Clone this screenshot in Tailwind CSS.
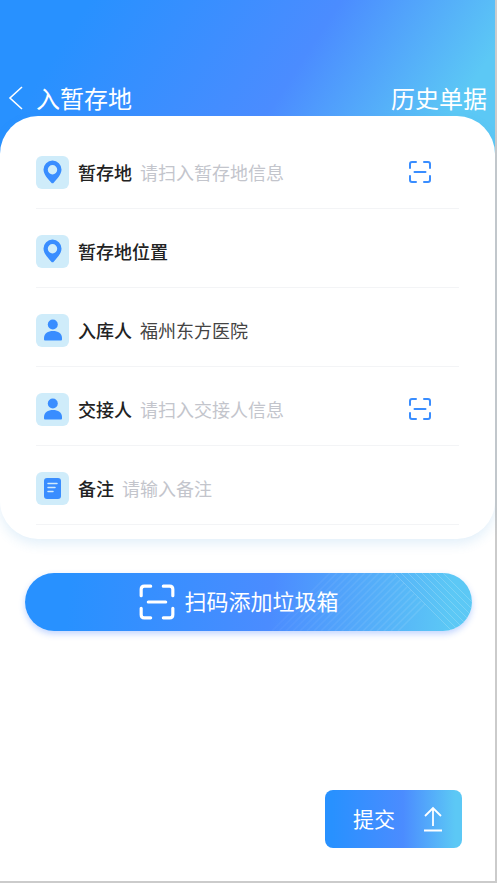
<!DOCTYPE html>
<html lang="zh-CN">
<head>
<meta charset="utf-8">
<meta name="viewport" content="width=device-width, initial-scale=1">
<title>入暂存地</title>
<script src="https://cdn.jsdelivr.net/npm/@tailwindcss/browser@4"></script>
</head>
<body class="font-['Noto_Sans_CJK_SC',sans-serif] bg-white">
<svg class="hidden" aria-hidden="true">
  <symbol id="pin" viewBox="0 0 33 33"><path fill="#398dff" fill-rule="evenodd" d="M16.500 4.500a9 9 0 0 0-9 9c0 5 4.300 9 7.600 13a1.800 1.800 0 0 0 2.800 0c3.300-4 7.600-8 7.600-13a9 9 0 0 0-9-9zm0 4.500a4.700 4.700 0 1 1 0 9.400a4.700 4.700 0 0 1 0-9.400z"/></symbol>
  <symbol id="person" viewBox="0 0 33 33"><g fill="#398dff"><circle cx="16.800" cy="10.500" r="5"/><path d="M8 25.500v-1.500c0-4.500 4-7 9-7s9 2.500 9 7v1.500q0 1-1 1h-16q-1 0-1-1z"/></g></symbol>
  <symbol id="note" viewBox="0 0 33 33"><rect x="8" y="6" width="17" height="21" rx="3" fill="#398dff"/><path d="M12 11.500h9M12 15.500h7M12 19.500h5" stroke="#d3ecfb" stroke-width="1.500" stroke-linecap="round"/></symbol>
  <symbol id="scan" viewBox="0 0 24 24"><path fill="none" stroke="currentColor" stroke-width="2" stroke-linecap="round" d="M2 8V4q0-2 2-2h4M16 2H20q2 0 2 2v4M22 16V20q0 2-2 2h-4M8 22H4q-2 0-2-2v-4M6.500 12h11"/></symbol>
</svg>
<div class="min-h-screen flex flex-col border-r-2 border-b-2 border-[#cbcbcb]">
  <header class="h-40 -mb-11 pt-20 bg-[linear-gradient(123deg,#2891ff_15%,#4b8cff_57%,#5cc8f5_88%)] text-white">
    <div class="h-9 px-2 flex items-center justify-between text-2xl">
      <div class="flex items-center gap-3">
        <button type="button" aria-label="返回"><svg class="block w-4 h-6" viewBox="0 0 16 24" fill="none" stroke="currentColor" stroke-width="1.600"><path d="M14 1L2 12l12 11"/></svg></button>
        <h1>入暂存地</h1>
      </div>
      <a href="#">历史单据</a>
    </div>
  </header>
  <main class="grow flex flex-col">
    <form class="grow flex flex-col">
      <div class="relative bg-white rounded-[38px] px-9 py-[14px] shadow-[0_5px_12px_rgba(60,150,220,0.14)] text-lg">
        <div class="h-[79px] pt-[6px] border-b border-[#f3f4f6] flex items-center">
          <svg class="w-[33px] h-[33px] rounded-md bg-[#cfecfa] shrink-0"><use href="#pin"/></svg>
          <label for="site" class="ml-[9px] font-medium text-[#222] shrink-0">暂存地</label>
          <input id="site" class="ml-2 min-w-0 grow outline-none text-[#444] placeholder:text-[#c3c5cc]" placeholder="请扫入暂存地信息">
          <button type="button" aria-label="扫描暂存地" class="mr-[27px] text-[#398dff]"><svg class="block w-6 h-6"><use href="#scan"/></svg></button>
        </div>
        <div class="h-[79px] pt-[6px] border-b border-[#f3f4f6] flex items-center">
          <svg class="w-[33px] h-[33px] rounded-md bg-[#cfecfa] shrink-0"><use href="#pin"/></svg>
          <label for="place" class="ml-[9px] font-medium text-[#222] shrink-0">暂存地位置</label>
          <input id="place" class="ml-2 min-w-0 grow outline-none text-[#444]">
        </div>
        <div class="h-[79px] pt-[6px] border-b border-[#f3f4f6] flex items-center">
          <svg class="w-[33px] h-[33px] rounded-md bg-[#cfecfa] shrink-0"><use href="#person"/></svg>
          <label for="keeper" class="ml-[9px] font-medium text-[#222] shrink-0">入库人</label>
          <input id="keeper" class="ml-2 min-w-0 grow outline-none text-[#444]" value="福州东方医院">
        </div>
        <div class="h-[79px] pt-[6px] border-b border-[#f3f4f6] flex items-center">
          <svg class="w-[33px] h-[33px] rounded-md bg-[#cfecfa] shrink-0"><use href="#person"/></svg>
          <label for="handover" class="ml-[9px] font-medium text-[#222] shrink-0">交接人</label>
          <input id="handover" class="ml-2 min-w-0 grow outline-none text-[#444] placeholder:text-[#c3c5cc]" placeholder="请扫入交接人信息">
          <button type="button" aria-label="扫描交接人" class="mr-[27px] text-[#398dff]"><svg class="block w-6 h-6"><use href="#scan"/></svg></button>
        </div>
        <div class="h-[79px] pt-[6px] border-b border-[#f3f4f6] flex items-center">
          <svg class="w-[33px] h-[33px] rounded-md bg-[#cfecfa] shrink-0"><use href="#note"/></svg>
          <label for="remark" class="ml-[9px] font-medium text-[#222] shrink-0">备注</label>
          <input id="remark" class="ml-2 min-w-0 grow outline-none text-[#444] placeholder:text-[#c3c5cc]" placeholder="请输入备注">
        </div>
      </div>
      <button type="button" class="relative overflow-hidden mt-[34px] ml-[25px] mr-[23px] h-[58px] pr-5 rounded-full bg-[linear-gradient(95deg,#2891ff_10%,#4b8cff_55%,#5cc8f5_95%)] shadow-[0_3px_6px_rgba(57,120,255,0.3)] text-white text-[22px] flex items-center justify-center gap-2">
        <svg class="absolute right-0 top-0 w-[200px] h-[58px]" viewBox="0 0 200 58" aria-hidden="true">
          <defs>
            <linearGradient id="fade" gradientUnits="userSpaceOnUse" x1="0" y1="0" x2="150" y2="0"><stop offset="0" stop-color="#fff" stop-opacity=".03"/><stop offset="1" stop-color="#fff" stop-opacity=".1"/></linearGradient>
          </defs>
          <path stroke="url(#fade)" stroke-width="1.500" d="M0 58L58 0M7 58L65 0M14 58L72 0M21 58L79 0M28 58L86 0M35 58L93 0M42 58L100 0M49 58L107 0M56 58L114 0M63 58L121 0M70 58L125 3M77 58L128 7M84 58L132 10M91 58L135 14M98 58L139 17M105 58L142 21M112 58L146 24M119 58L149 28M126 58L153 31"/>
          <path stroke="#fff" stroke-opacity=".18" d="M122 0l58 58M129 0l58 58M136 0l58 58M143 0l58 58M150 0l58 58M157 0l58 58M164 0l58 58M171 0l58 58"/>
        </svg>
        <svg class="relative w-[38px] h-[38px]"><use href="#scan"/></svg>
        <span class="relative pb-1">扫码添加垃圾箱</span>
      </button>
      <button type="submit" class="mt-auto mb-[33px] mr-[33px] self-end h-[58px] w-[137px] pl-7 pr-5 rounded-lg bg-[linear-gradient(90deg,#2891ff_5%,#4b8cff_57%,#5cc8f5_95%)] text-white text-[21px] flex items-center justify-between">
        提交
        <svg class="w-[18px] h-[26px]" viewBox="0 0 18 26" fill="none" stroke="currentColor" stroke-width="1.800"><path d="M9 20V2M1 10l8-8 8 8M0 24.500h18"/></svg>
      </button>
    </form>
  </main>
</div>
</body>
</html>
